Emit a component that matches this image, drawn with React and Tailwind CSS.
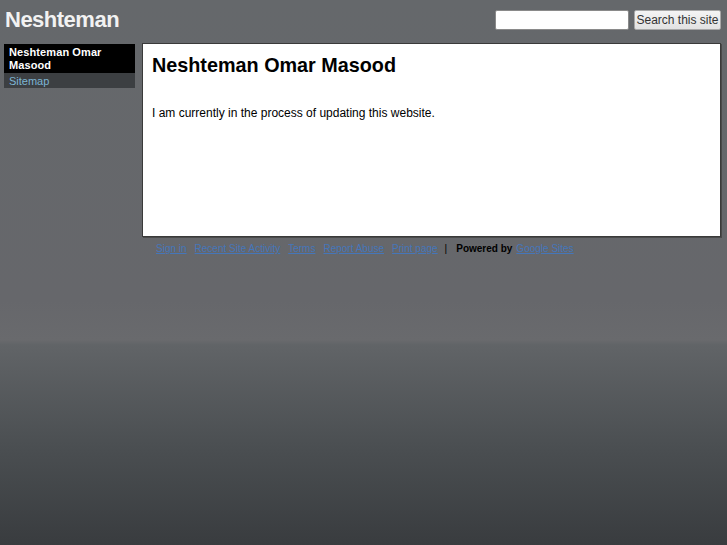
import React from 'react';

const links = ['Sign in', 'Recent Site Activity', 'Terms', 'Report Abuse', 'Print page'];

export default function App() {
  return (
    <div
      className="min-h-[545px] w-full bg-[linear-gradient(to_bottom,#65686b_0px,#66676b_300px,#696a6d_340px,#616467_345px,#4a4e51_450px,#393c3f_545px)] text-black"
      style={{ fontFamily: '"Liberation Sans", Arial, sans-serif' }}
    >
      <header className="flex h-[43px] items-start justify-between">
        <h1 className="ml-[5px] mt-[7px] text-[22px] leading-[26px] font-bold tracking-[-0.5px] text-[#f2f2f2]">
          Neshteman
        </h1>
        <form className="mr-[6px] mt-[10px] flex items-center" onSubmit={(e) => e.preventDefault()}>
          <input
            type="text"
            className="h-[20px] w-[134px] rounded-[2px] border border-[#8a8a8a] bg-white px-1 text-[12px] outline-none"
          />
          <button
            type="submit"
            className="ml-[5px] h-[20px] w-[87px] rounded-[2px] border border-[#a8a8a8] bg-[linear-gradient(to_bottom,#f4f4f4,#e2e2e2)] text-[12px] leading-[18px] text-[#333]"
          >
            Search this site
          </button>
        </form>
      </header>

      <div className="flex items-start">
        <nav className="ml-[4px] mt-[1px] w-[131px]">
          <div className="bg-black px-[5px] pt-[2px] pb-[1px] text-[11px] leading-[13px] font-bold tracking-[0.1px] text-white">
            Neshteman Omar Masood
          </div>
          <div className="bg-[#3c3f42] px-[5px] pt-[2px] pb-0 text-[11px] leading-[13px] text-[#7db5d3]">Sitemap</div>
        </nav>

        <div className="ml-[7px] mr-[6px] flex-1">
          <main className="h-[194px] border border-[#3a3a3a] bg-white px-[9px] pt-[9px] shadow-[1px_1px_0_#4a4a4a]">
            <h2 className="text-[19.8px] leading-[24px] font-bold">Neshteman Omar Masood</h2>
            <p className="mt-[29px] text-[12px] leading-[14px]">I am currently in the process of updating this website.</p>
          </main>

          <footer className="ml-[14px] mt-[6px] flex items-center text-[10px] leading-[12px]">
            {links.map((l) => (
              <a key={l} href="#" className="mr-[8px] text-[#4576ba] underline">
                {l}
              </a>
            ))}
            <span className="-ml-[1px] mr-[9px] text-black">|</span>
            <span className="font-bold text-black">Powered by</span>
            <a href="#" className="ml-[4px] text-[#4576ba] underline">
              Google Sites
            </a>
          </footer>
        </div>
      </div>
    </div>
  );
}
